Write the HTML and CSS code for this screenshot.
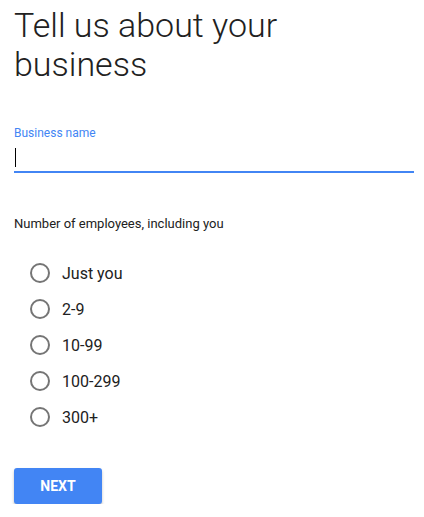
FILE: index.html
```html
<!DOCTYPE html>
<html>
<head>
<meta charset="utf-8">
<link rel="stylesheet" href="styles.css">
</head>
<body>
<main class="page">
  <h1 class="title">Tell us about your business</h1>
  <div class="field">
    <label class="field-label">Business name</label>
    <div class="field-input"><span class="caret"></span></div>
  </div>
  <p class="question">Number of employees, including you</p>
  <ul class="options">
    <li class="option"><span class="radio"></span><span class="option-label">Just you</span></li>
    <li class="option"><span class="radio"></span><span class="option-label">2-9</span></li>
    <li class="option"><span class="radio"></span><span class="option-label">10-99</span></li>
    <li class="option"><span class="radio"></span><span class="option-label">100-299</span></li>
    <li class="option"><span class="radio"></span><span class="option-label">300+</span></li>
  </ul>
  <button class="next">NEXT</button>
</main>
</body>
</html>
```
FILE: styles.css
```css
html, body { margin: 0; padding: 0; background: #fff; }
body { font-family: Roboto, "Noto Sans", sans-serif; color: #212121; }
.page { padding: 6px 10px 0 14px; width: 400px; }
.title {
  margin: 0;
  font-weight: 300;
  font-size: 34px;
  line-height: 39px;
  color: #212121;
  width: 300px;
}
.field { margin-top: 41px; }
.field-label { display: block; font-size: 12px; line-height: 16px; color: #4285f4; }
.field-input {
  border-bottom: 2px solid #4285f4;
  display: flex;
  align-items: flex-end;
  padding-bottom: 4px;
  box-sizing: border-box;
  height: 32px;
}
.caret { display: block; width: 1px; height: 19px; background: #000; margin-left: 1px; }
.question { margin: 43px 0 0; font-size: 13px; line-height: 16px; color: #212121; }
.options { list-style: none; margin: 23px 0 0; padding: 0 0 0 16px; }
.option { display: flex; align-items: center; height: 36px; }
.radio {
  width: 16px; height: 16px;
  border: 2px solid #757575;
  border-radius: 50%;
  flex: none;
}
.option-label { margin-left: 12px; font-size: 16px; color: #212121; }
.next {
  margin-top: 33px;
  width: 88px; height: 36px;
  border: none;
  border-radius: 3px;
  background: #4285f4;
  color: #fff;
  font-family: Roboto, sans-serif;
  font-weight: 700;
  font-size: 14px;
  box-shadow: 0 2px 3px rgba(0,0,0,0.25);
  padding: 0;
}
```
